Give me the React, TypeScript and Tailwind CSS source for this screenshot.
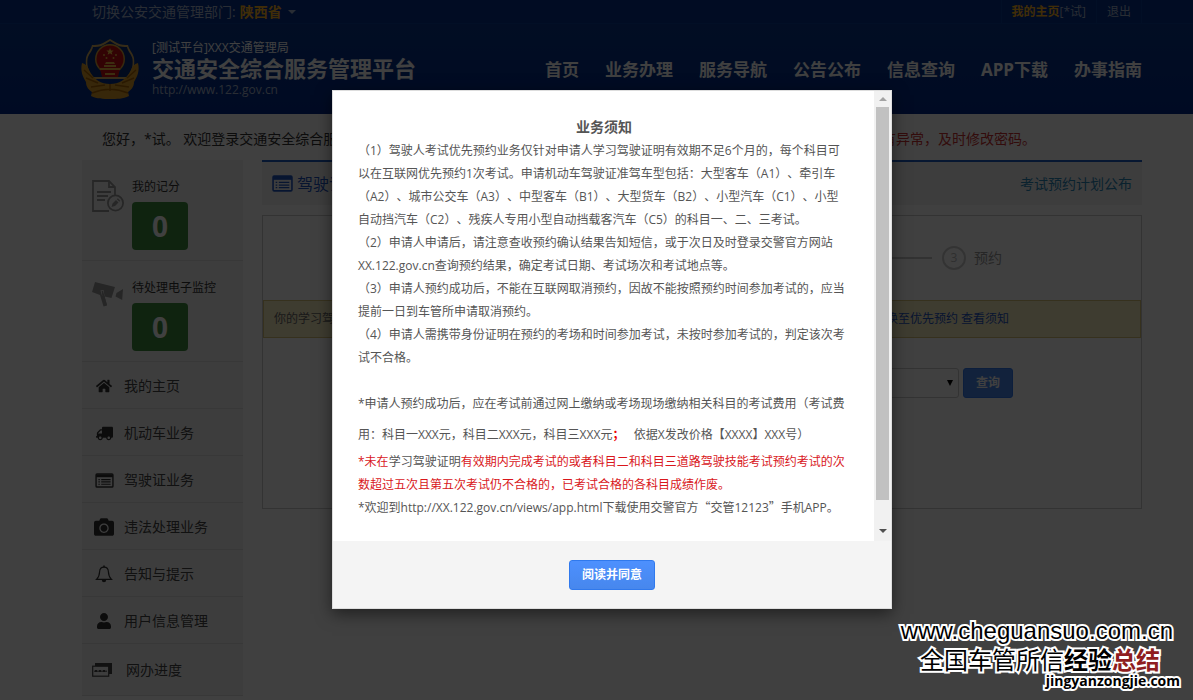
import type { ReactNode } from "react";
import { FaHome, FaTruck, FaCamera, FaUser } from "react-icons/fa";

const cjk = "font-['Open_Sans','Noto_Sans_CJK_SC',sans-serif] [text-spacing-trim:space-all]";

function ListIcon({ className }: { className: string }) {
  return (
    <svg viewBox="0 0 20 16" className={className} fill="none" stroke="currentColor" strokeWidth="1.5">
      <rect x="1" y="1" width="18" height="14" rx="1" />
      <path d="M1 3h18" strokeWidth="3" />
      <path d="M3.5 7h1.5M6.5 7h10M3.5 9.5h1.5M6.5 9.5h10M3.5 12h1.5M6.5 12h10" strokeWidth="1.2" />
    </svg>
  );
}

function BellIcon() {
  return (
    <svg viewBox="0 0 18 18" className="size-[18px]" fill="none" stroke="currentColor" strokeWidth="1.2">
      <path d="M9 2.200c-3 0-4.300 2-4.400 4.600C4.500 10 3.600 12.500 1.500 14.400h15c-2.100-1.900-3-4.400-3.100-7.600C13.300 4.200 12 2.200 9 2.200z" />
      <path d="M9 .4v1.800" strokeWidth="1.6" />
      <path d="M6.800 15h4.400a2.200 2.200 0 0 1-4.400 0z" fill="currentColor" stroke="none" />
    </svg>
  );
}

function ProgressIcon() {
  return (
    <svg viewBox="0 0 20 14" className="h-[14px] w-5" fill="none" stroke="currentColor">
      <path d="M4 3V1h15v9h-2" strokeWidth="2" fill="currentColor" />
      <rect x="0.7" y="3.2" width="16" height="10" fill="#f4f4f4" strokeWidth="1.2" />
      <path d="M2 8.2h13" />
      <path d="M3 7h2v2H3zM7 7h2v2H7zM11 7h2v2h-2z" fill="currentColor" stroke="none" />
    </svg>
  );
}

function ScoreIcon() {
  return (
    <svg viewBox="0 0 32 33" className="h-[33px] w-8" fill="none" stroke="currentColor" strokeWidth="1.8">
      <path d="M17 31H1V1h16l6 6v8" />
      <path d="M17 1v6h6" />
      <path d="M5 12h14M5 16h11M5 20h8" />
      <circle cx="23.500" cy="23" r="7.6" />
      <path d="M19.500 27l1-3.500 3.500-3.500 2.500 2.500-3.500 3.500zM24.800 19.200l1-1 2.500 2.500-1 1z" fill="currentColor" stroke="none" />
    </svg>
  );
}

function CctvIcon() {
  return (
    <svg viewBox="0 0 32 26" className="h-[26px] w-8" fill="currentColor">
      <path d="M3 1l20 5-3.500 11-7-1.600 2.500 9-3.500 1-3.500-11.500L0 11z" />
      <path d="M24.500 12l6.500-4-.8 11-6.700-3.500z" />
      <path d="M8.500 9.500l3-.5 1 6-2.500-.6z" fill="#f4f4f4" />
      <path d="M9.500 10l1.500-.3L15 24l-3 .8z" />
    </svg>
  );
}

function Emblem() {
  return (
    <svg viewBox="0 0 60 62" className="h-[62px] w-[60px] shrink-0">
      <path d="M30 1l7 4c4 2 8 2 11 2 1 5 5 8 6 13 1 8-1 16-6 21H12C7 36 5 28 6 20 7 15 11 12 12 7c3 0 7 0 11-2z" fill="#d8b060" />
      <path d="M30 3l6.500 4c4 2 7.500 2 10.500 2 1 5 4.500 7 5.500 12 1 8-2 14-6 18h-33c-4-4-7-10-6-18 1-5 4.500-7 5.500-12 3 0 6.500 0 10.500-2z" fill="#0a2d78" />
      <path d="M2 25c4 1 6 4 7 7 5 10 12 14 21 14s16-4 21-14c1-3 3-6 7-7 2 8-1 14-4 19 0 5-3 8-6 10l1 4c-6 3-12 3-19 3s-13 0-19-3l1-4c-3-2-6-5-6-10-3-5-6-11-4-19z" fill="#dc9c28" />
      <path d="M4 32l9 8M6 40l12 5M11 49l14-2M56 32l-9 8M54 40l-12 5M49 49l-14-2M12 55c12-5 24-5 36 0M30 46v7" stroke="#a96405" strokeWidth="1.500" fill="none" />
      <circle cx="30" cy="21" r="15" fill="#dca838" />
      <circle cx="30" cy="21" r="13.500" fill="#c80f12" />
      <path d="M19 27l3 12h16l3-12z" fill="#c80f12" />
      <path d="M30 10l1 2.500h2.600l-2 1.700.8 2.600-2.400-1.500-2.400 1.500.8-2.600-2-1.700H29z" fill="#ffd34a" />
      <g fill="#f0b840">
        <circle cx="24" cy="17" r="1" /><circle cx="36" cy="17" r="1" /><circle cx="26.500" cy="20" r="1" /><circle cx="33.500" cy="20" r="1" />
        <path d="M26 24h8l1 2H25zM24 27h12v2H24zM20 30h20v2H20zM25 35h10v2H25z" />
      </g>
    </svg>
  );
}

const nav = ["首页", "业务办理", "服务导航", "公告公布", "信息查询", "APP下载", "办事指南"];

const menu: { label: string; icon: ReactNode }[] = [
  { label: "我的主页", icon: <FaHome className="size-4" /> },
  { label: "机动车业务", icon: <FaTruck className="size-[17px] -scale-x-100" /> },
  { label: "驾驶证业务", icon: <ListIcon className="h-[15px] w-[19px]" /> },
  { label: "违法处理业务", icon: <FaCamera className="size-5" /> },
  { label: "告知与提示", icon: <BellIcon /> },
  { label: "用户信息管理", icon: <FaUser className="size-4" /> },
];

function Stat({ label, icon }: { label: string; icon: ReactNode }) {
  return (
    <div className="flex h-[101px] gap-2 border-b border-[#ddd] pt-[17px] pl-2.5">
      <div className="pt-[3px] text-[#999]">{icon}</div>
      <div className="flex flex-col gap-[5px] text-xs leading-5 text-[#333]">
        {label}
        <div className="flex h-12 w-14 items-center justify-center rounded bg-[#3c8a3c] text-[28px] font-bold text-white">0</div>
      </div>
    </div>
  );
}

function Header() {
  return (
    <header className="bg-linear-to-b from-[#0b3a8c] to-[#022a8a] pl-[31px] text-white">
      <div className="-ml-[31px] h-6 border-b border-[#0b3f96] bg-[#04308a] pl-[31px]">
        <div className="mx-auto flex h-full max-w-[1060px] items-center justify-between pl-2.5 text-[#a5b5cf]">
          <button type="button" className="flex items-center gap-1 text-sm">
            切换公安交通管理部门: <b className="text-[#ffb321]">陕西省</b>
            <span className="ml-0.5 border-x-4 border-t-4 border-x-transparent border-t-current" />
          </button>
          <div className="flex h-full items-center text-xs">
            <a href="#home" className="flex h-full items-center border-l border-[#0b3f96] px-2.5"><b className="text-[#ffb321]">我的主页</b>[*试]</a>
            <a href="#logout" className="flex h-full items-center border-x border-[#0b3f96] px-2.5">退出</a>
          </div>
        </div>
      </div>
      <div className="mx-auto flex h-[90px] max-w-[1060px] items-center justify-between">
        <div className="-ml-0.5 flex items-center gap-3">
          <Emblem />
          <div className="flex flex-col">
            <span className="text-xs leading-4">[测试平台]XXX交通管理局</span>
            <h1 className="text-[22px] leading-6 font-bold">交通安全综合服务管理平台</h1>
            <span className="mt-0.5 text-xs leading-4 text-[#a5b5cf]">http://www.122.gov.cn</span>
          </div>
        </div>
        <nav className="flex gap-[26px] pt-0.5 text-[17px] font-bold">
          {nav.map((n) => <a key={n} href="#nav">{n}</a>)}
        </nav>
      </div>
    </header>
  );
}

function Dialog() {
  return (
    <section role="dialog" aria-modal="true" aria-labelledby="notice-title" className="w-[560px] border border-[#ddd] bg-white text-xs text-[#555] shadow-[0_5px_15px_rgba(0,0,0,0.5)]">
      <div className="flex h-[450px]">
        <div className="min-w-0 flex-1 pt-6 pr-6 pl-[25px] leading-[23px]">
          <h2 id="notice-title" className="mb-px text-center text-sm leading-[23px] font-bold">业务须知</h2>
          <p>（1）驾驶人考试优先预约业务仅针对申请人学习驾驶证明有效期不足6个月的，每个科目可<br />以在互联网优先预约1次考试。申请机动车驾驶证准驾车型包括：大型客车（A1）、牵引车<br />（A2）、城市公交车（A3）、中型客车（B1）、大型货车（B2）、小型汽车（C1）、小型<br />自动挡汽车（C2）、残疾人专用小型自动挡载客汽车（C5）的科目一、二、三考试。</p>
          <p>（2）申请人申请后，请注意查收预约确认结果告知短信，或于次日及时登录交警官方网站<br />XX.122.gov.cn查询预约结果，确定考试日期、考试场次和考试地点等。</p>
          <p>（3）申请人预约成功后，不能在互联网取消预约，因故不能按照预约时间参加考试的，应当<br />提前一日到车管所申请取消预约。</p>
          <p>（4）申请人需携带身份证明在预约的考场和时间参加考试，未按时参加考试的，判定该次考<br />试不合格。</p>
          <p className="pt-[19px] leading-[31px]">*申请人预约成功后，应在考试前通过网上缴纳或考场现场缴纳相关科目的考试费用（考试费<br />用：科目一XXX元，科目二XXX元，科目三XXX元<b className="text-[#e00]">；</b>&nbsp; &nbsp;依据X发改价格【XXXX】XXX号）</p>
          <p className="text-[#d9171c]">*未在<span className="text-[#555]">学习驾驶证明</span>有效期内完成考试的或者科目二和科目三道路驾驶技能考试预约考试的次<br />数超过五次且第五次考试仍不合格的，已考试合格的各科目成绩作废。</p>
          <p>*欢迎到http://XX.122.gov.cn/views/app.html下载使用交警官方<span className="font-['Noto_Sans_CJK_SC',sans-serif] leading-none">“</span>交管12123<span className="font-['Noto_Sans_CJK_SC',sans-serif] leading-none">”</span>手机APP。</p>
        </div>
        <div aria-hidden="true" className="flex w-[17px] flex-col items-center bg-[#f1f1f1]">
          <span className="my-[6px] border-x-4 border-b-4 border-x-transparent border-b-[#a3a3a3]" />
          <span className="h-[393px] w-[13px] bg-[#c1c1c1]" />
          <span className="mt-auto mb-2 border-x-4 border-t-4 border-x-transparent border-t-[#505050]" />
        </div>
      </div>
      <div className="flex h-[67px] items-center justify-center bg-[#f4f4f4]">
        <button type="button" className="h-[30px] rounded-[3px] border border-[#3079ed] bg-linear-to-b from-[#4d90fe] to-[#4787ed] px-3 text-xs font-bold text-white">阅读并同意</button>
      </div>
    </section>
  );
}

const outline = "[paint-order:stroke] [-webkit-text-stroke:4px_white]";

export default function App() {
  return (
    <div className={`relative h-screen overflow-hidden bg-white ${cjk}`}>
      <Header />
      <div className="pl-[31px]">
        <main className="mx-auto max-w-[1060px]">
          <p className="flex h-[46px] items-center justify-between pt-1 pr-[106px] pl-5 text-sm text-[#333]">
            <span>您好，*试。 欢迎登录交通安全综合服务管理平台</span>
            <span className="text-[#c33]">如有异常，及时修改密码。</span>
          </p>
          <div className="flex items-start gap-[19px]">
            <aside className="w-[161px] shrink-0 bg-[#f4f4f4]">
              <Stat label="我的记分" icon={<ScoreIcon />} />
              <Stat label="待处理电子监控" icon={<CctvIcon />} />
              {menu.map((m) => (
                <a key={m.label} href="#menu" className="flex h-[47px] items-center gap-[9px] border-b border-[#ddd] pt-0.5 pl-[11px] text-sm text-[#444]">
                  <span className="flex w-[22px] justify-center text-[#333]">{m.icon}</span>
                  {m.label}
                </a>
              ))}
              <a href="#menu" className="flex h-[52px] items-center gap-3.5 border-b border-[#ddd] pl-2.5 text-sm text-[#444]">
                <ProgressIcon />
                网办进度
              </a>
            </aside>
            <section className="min-w-0 flex-1">
              <div className="flex h-[45px] items-center gap-1 border-t-2 border-[#1d5cc4] bg-[#f4f4f4] pr-2.5 pl-2.5">
                <ListIcon className="h-[17px] w-[21px] text-[#1f54c0]" />
                <h2 className="text-base text-[#1f54c0]">驾驶证业务</h2>
                <a href="#plan" className="ml-auto text-sm text-[#2a86b8]">考试预约计划公布</a>
              </div>
              <div className="mt-2.5 h-[294px] border border-[#ccc]">
                <div className="flex h-[84px] items-center justify-end gap-2 pr-[139px] text-sm text-[#999]">
                  <span className="mr-0.5 h-0.5 w-40 bg-[#c8c8c8]" />
                  <span className="flex size-6 items-center justify-center rounded-full border-2 border-[#ccc] text-xs text-[#bbb]">3</span>
                  预约
                </div>
                <div className="flex h-[38px] items-center justify-between border border-[#d8c27a] bg-[#f7edc0] pr-[131px] pl-2.5 text-xs text-[#666]">
                  <span>你的学习驾驶证明</span>
                  <a href="#notice" className="text-[#1f54c0]">切换至优先预约 查看须知</a>
                </div>
                <div className="mt-[30px] flex justify-end gap-1 pr-32">
                  <div className="relative">
                    <select aria-label="考试科目" className="h-[30px] w-52 appearance-none rounded-[3px] border border-[#ccc] bg-white" />
                    <svg viewBox="0 0 6 6" className="pointer-events-none absolute top-3 right-1.5 size-1.5 fill-black"><path d="M0 0h6L3 6z" /></svg>
                  </div>
                  <button type="button" className="h-[30px] w-[50px] rounded-[3px] border border-[#3079ed] bg-[#4787ed] text-xs font-bold text-white">查询</button>
                </div>
              </div>
            </section>
          </div>
        </main>
      </div>
      <div className="absolute inset-0 flex items-start justify-center bg-black/75 pt-[90px] pl-[31px]">
        <Dialog />
      </div>
      <div className="absolute right-[13px] bottom-[11px] flex flex-col items-end text-black">
        <div className={`pr-[7px] font-['Liberation_Sans'] text-2xl leading-8 ${outline}`}>www.cheguansuo.com.cn</div>
        <div className={`flex pr-5 text-2xl leading-[26px] ${outline}`}>全国车管所信<b>经验</b><b className="text-[#8f1d20]">总结</b></div>
        <div className={`text-sm leading-4 font-bold ${outline}`}>jingyanzongjie.com</div>
      </div>
    </div>
  );
}
